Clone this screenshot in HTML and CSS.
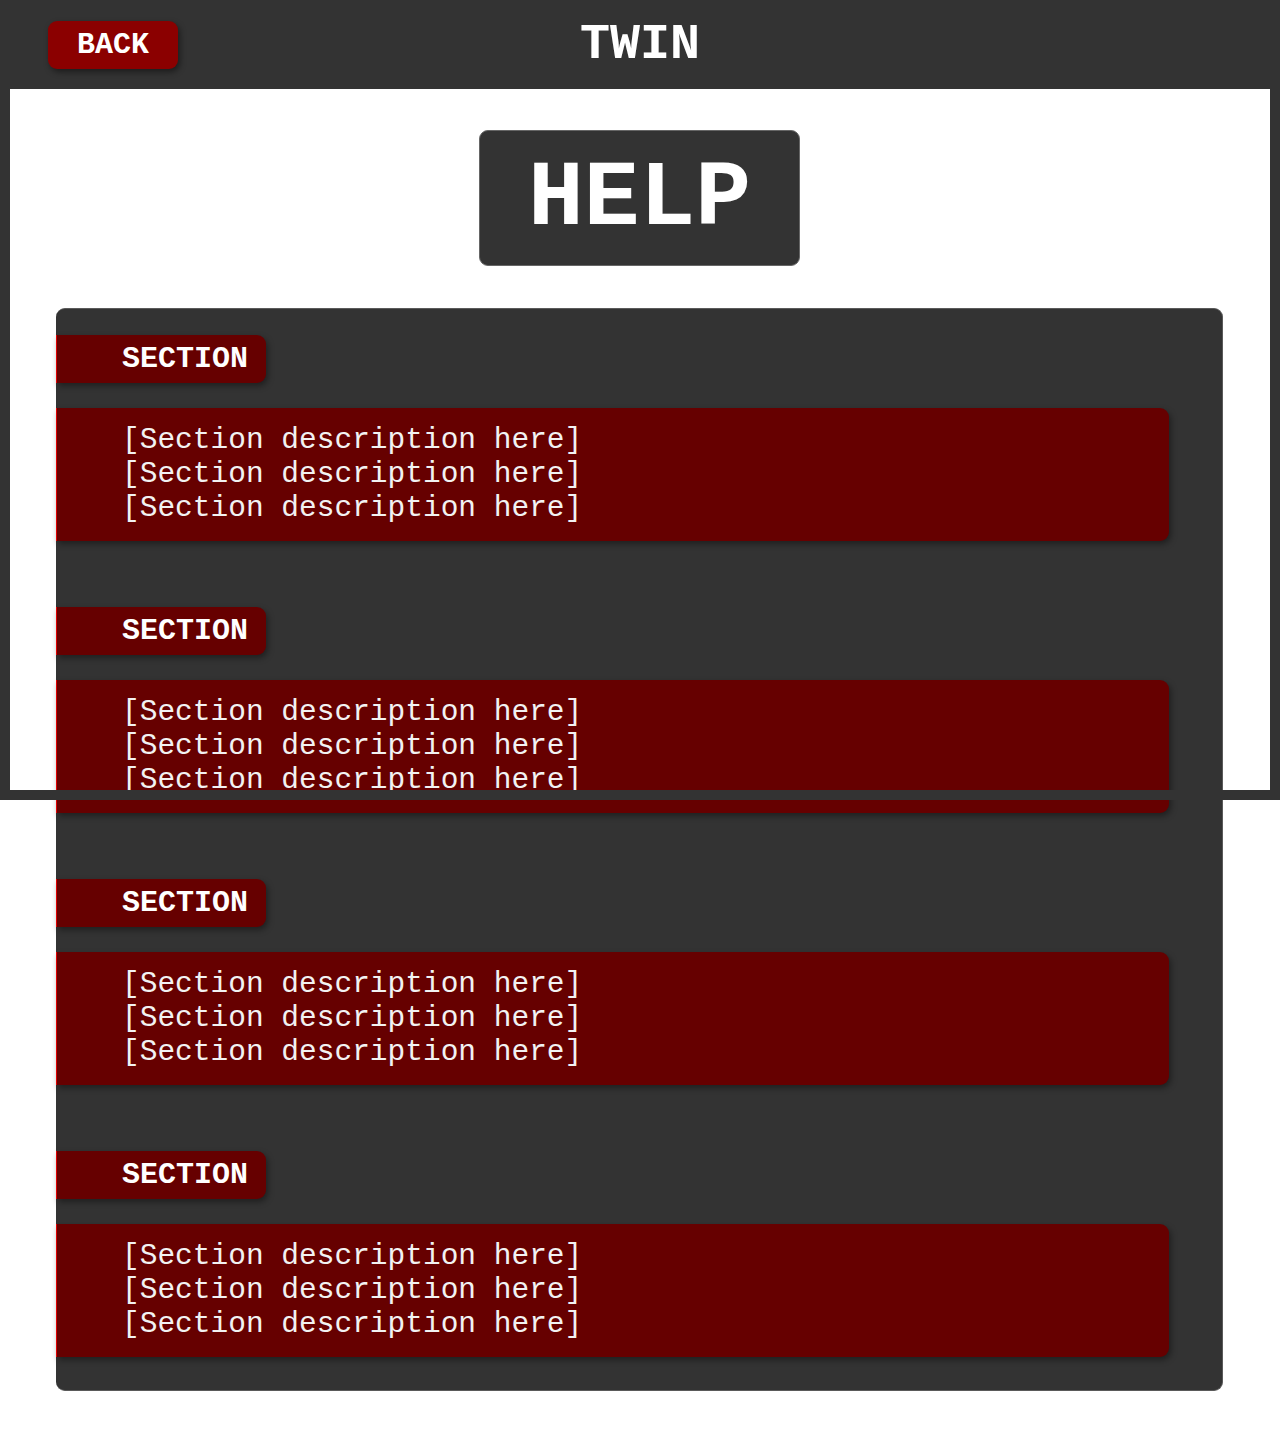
FILE: index.html
```html
<!DOCTYPE html>
<html lang="en">
<head>
<meta charset="utf-8">
<title>TWIN - Help</title>
<link rel="stylesheet" href="styles.css">
</head>
<body>
<header class="topbar">
  <div class="topbar-left"><button class="back-btn">BACK</button></div>
  <h1 class="title">TWIN</h1>
  <div class="topbar-right"></div>
</header>
<main class="content">
  <div class="help-wrap"><h2 class="help-title">HELP</h2></div>
  <div class="panel">
    <section class="section">
      <h3 class="section-label">SECTION</h3>
      <div class="section-desc">
        <p>[Section description here]</p>
        <p>[Section description here]</p>
        <p>[Section description here]</p>
      </div>
    </section>
    <section class="section">
      <h3 class="section-label">SECTION</h3>
      <div class="section-desc">
        <p>[Section description here]</p>
        <p>[Section description here]</p>
        <p>[Section description here]</p>
      </div>
    </section>
    <section class="section">
      <h3 class="section-label">SECTION</h3>
      <div class="section-desc">
        <p>[Section description here]</p>
        <p>[Section description here]</p>
        <p>[Section description here]</p>
      </div>
    </section>
    <section class="section">
      <h3 class="section-label">SECTION</h3>
      <div class="section-desc">
        <p>[Section description here]</p>
        <p>[Section description here]</p>
        <p>[Section description here]</p>
      </div>
    </section>
  </div>
</main>
<div class="frame"></div>
</body>
</html>
```
FILE: styles.css
```css
* { box-sizing: border-box; }
html, body { margin: 0; padding: 0; }
body {
  background: #ffffff;
  font-family: "Courier New", "Liberation Mono", monospace;
  color: #ffffff;
  position: relative;
  min-height: 1434px;
}
.topbar {
  height: 89px;
  background: #333333;
  display: grid;
  grid-template-columns: 1fr auto 1fr;
  align-items: center;
  padding: 0 48px;
}
.back-btn {
  font-family: inherit;
  font-weight: bold;
  font-size: 30px;
  color: #ffffff;
  background: #8b0000;
  border: none;
  border-radius: 9px;
  width: 130px;
  height: 48px;
  padding: 0;
  box-shadow: 2px 3px 6px rgba(0, 0, 0, 0.45);
  justify-self: start;
}
.title {
  margin: 0;
  font-size: 50px;
  font-weight: bold;
  line-height: 1;
}
.content {
  padding: 41px 57px 44px 56px;
}
.help-wrap {
  display: flex;
  justify-content: center;
  margin-bottom: 42px;
}
.help-title {
  margin: 0;
  width: 321px;
  height: 136px;
  display: flex;
  align-items: center;
  justify-content: center;
  background: #333333;
  border: 1px solid #666666;
  border-radius: 9px;
  font-size: 93px;
  font-weight: bold;
  line-height: 1;
  padding-top: 2px;
}
.panel {
  background: #333333;
  border: 1px solid #5a5a5a;
  border-left: none;
  border-radius: 9px;
  padding: 26px 53px 33px 0;
  display: flex;
  flex-direction: column;
  gap: 66px;
}
.section {
  display: flex;
  flex-direction: column;
  gap: 25px;
}
.section-label {
  margin: 0;
  align-self: flex-start;
  width: 210px;
  height: 48px;
  display: flex;
  align-items: center;
  padding-left: 65px;
  background: #660000;
  border-left: 1px solid #e00000;
  border-radius: 0 9px 9px 0;
  font-size: 30px;
  font-weight: bold;
  box-shadow: 2px 3px 6px rgba(0, 0, 0, 0.4);
}
.section-desc {
  background: #660000;
  border-left: 1px solid #e00000;
  border-radius: 0 9px 9px 0;
  padding: 15px 0 16px 65px;
  box-shadow: 2px 3px 6px rgba(0, 0, 0, 0.4);
}
.section-desc p {
  margin: 0;
  font-size: 29.5px;
  line-height: 34px;
  color: #f2f2f2;
  white-space: pre;
}
.frame {
  position: absolute;
  top: 89px;
  left: 0;
  width: 1280px;
  height: 711px;
  border: 10px solid #333333;
  border-top: none;
  pointer-events: none;
}
```
